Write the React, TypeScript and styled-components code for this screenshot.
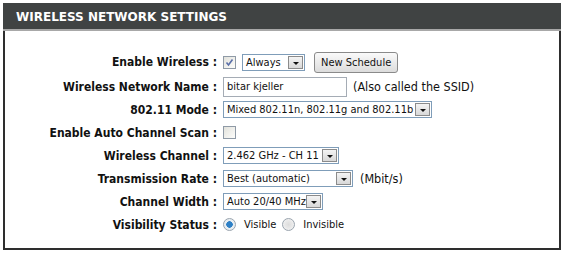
import React from 'react';
import styled, { createGlobalStyle } from 'styled-components';

const GlobalStyle = createGlobalStyle`
  body {
    margin: 0;
    background: #ffffff;
    font-family: "DejaVu Sans Condensed", "Liberation Sans", sans-serif;
  }
`;

const Panel = styled.section`
  margin: 3px 0 0 3px;
  width: 558px;
  box-sizing: border-box;
`;

const Header = styled.h2`
  margin: 0;
  height: 26px;
  padding-left: 13px;
  background: #404343;
  border-bottom: 2px solid #a8a8a8;
  color: #ffffff;
  font-family: "DejaVu Sans", Verdana, sans-serif;
  font-size: 12px;
  font-weight: bold;
  line-height: 28px;
`;

const Body = styled.div`
  border: 2px solid #2e2e2e;
  border-top: none;
  height: 219px;
  box-sizing: border-box;
  padding-top: 18px;
  display: grid;
  grid-template-columns: 212px 1fr;
  grid-template-rows: 26px;
  grid-auto-rows: 23px;
  align-items: center;
  column-gap: 6px;
`;

const Label = styled.label`
  text-align: right;
  font-weight: bold;
  font-size: 12px;
  color: #111;
  white-space: nowrap;
`;

const Field = styled.div`
  display: flex;
  align-items: center;
  gap: 6px;
  font-size: 11px;
  color: #111;
  white-space: nowrap;
`;

const Check = styled.span`
  width: 11px;
  height: 11px;
  border: 1px solid #8f9aa6;
  background: linear-gradient(135deg, #e2e2dc, #fdfdfb);
  display: inline-flex;
  align-items: center;
  justify-content: center;
`;

const Select = styled.div<{ $width: number }>`
  width: ${({ $width }) => $width}px;
  height: 17px;
  box-sizing: border-box;
  border: 1px solid #7f9db9;
  background: #fff;
  display: flex;
  align-items: center;
  justify-content: space-between;
  padding-left: 3px;
  padding-right: 1px;
  font-size: 11px;
  overflow: hidden;
`;

const Arrow = styled.span`
  flex: none;
  width: 15px;
  height: 13px;
  box-sizing: border-box;
  border: 1px solid #8b8b8b;
  background: linear-gradient(#f4f4f4, #d8d8d8);
  display: flex;
  align-items: center;
  justify-content: center;
  &::after {
    content: '';
    border-left: 3px solid transparent;
    border-right: 3px solid transparent;
    border-top: 3px solid #111;
    margin-top: 2px;
  }
`;

const Button = styled.button`
  height: 21px;
  padding: 0 6px;
  margin-left: 3px;
  border: 1px solid #8a8a8a;
  border-radius: 3px;
  background: linear-gradient(#fafafa, #dcdcdc);
  font-family: inherit;
  font-size: 11px;
  color: #111;
`;

const TextBox = styled.div`
  width: 124px;
  height: 20px;
  box-sizing: border-box;
  border: 1px solid #a5acb5;
  padding-left: 3px;
  display: flex;
  align-items: center;
  font-size: 11px;
`;

const Radio = styled.span<{ $checked?: boolean }>`
  width: 11px;
  height: 11px;
  border-radius: 50%;
  border: 1px solid #9aa4ae;
  background: ${({ $checked }) =>
    $checked
      ? 'radial-gradient(circle, #2e80c6 0 3px, #e8eef2 3.5px)'
      : 'radial-gradient(circle, #dcdcdc 0, #f6f6f6 100%)'};
`;

const Note = styled.span<{ $gap?: number; $large?: boolean }>`
  margin-left: ${({ $gap }) => $gap ?? 0}px;
  font-size: ${({ $large }) => ($large ? '12.5px' : 'inherit')};
`;

function Dropdown({ width, value }: { width: number; value: string }) {
  return (
    <Select $width={width}>
      <span>{value}</span>
      <Arrow />
    </Select>
  );
}

function Tick() {
  return (
    <svg width="9" height="9" viewBox="0 0 9 9">
      <path d="M1.5 4.5 L3.5 7 L7.5 1.5" fill="none" stroke="#5a6fa8" strokeWidth="1.6" />
    </svg>
  );
}

export default function App() {
  return (
    <>
      <GlobalStyle />
      <Panel>
        <Header>WIRELESS NETWORK SETTINGS</Header>
        <Body>
          <Label>Enable Wireless :</Label>
          <Field>
            <Check>
              <Tick />
            </Check>
            <Dropdown width={63} value="Always" />
            <Button>New Schedule</Button>
          </Field>

          <Label>Wireless Network Name :</Label>
          <Field>
            <TextBox>bitar kjeller</TextBox>
            <Note $large>(Also called the SSID)</Note>
          </Field>

          <Label>802.11 Mode :</Label>
          <Field>
            <Dropdown width={209} value="Mixed 802.11n, 802.11g and 802.11b" />
          </Field>

          <Label>Enable Auto Channel Scan :</Label>
          <Field>
            <Check />
          </Field>

          <Label>Wireless Channel :</Label>
          <Field>
            <Dropdown width={116} value="2.462 GHz - CH 11" />
          </Field>

          <Label>Transmission Rate :</Label>
          <Field>
            <Dropdown width={130} value="Best (automatic)" />
            <Note $gap={1} $large>(Mbit/s)</Note>
          </Field>

          <Label>Channel Width :</Label>
          <Field>
            <Dropdown width={100} value="Auto 20/40 MHz" />
          </Field>

          <Label>Visibility Status :</Label>
          <Field>
            <Radio $checked />
            <Note $gap={2}>Visible</Note>
            <Radio />
            <Note $gap={2}>Invisible</Note>
          </Field>
        </Body>
      </Panel>
    </>
  );
}
